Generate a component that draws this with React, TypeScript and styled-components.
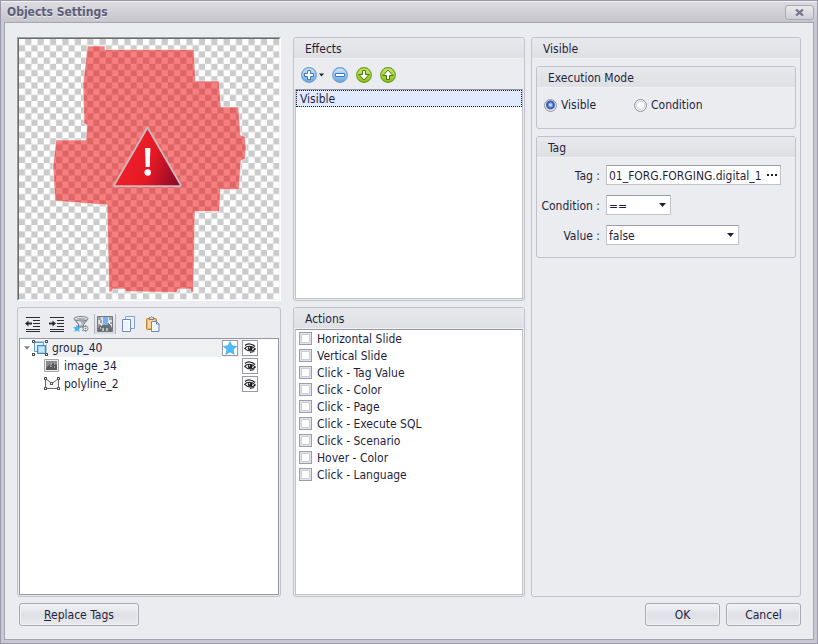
import React, { useState } from "react";
import styled, { createGlobalStyle, css } from "styled-components";

const ink = "#1f1f3d";
const line = "#c1c2ca";
const face = "#ebecef";

const GlobalStyle = createGlobalStyle`
  *, *::before, *::after { box-sizing: border-box; }
  body { margin: 0; }
  body, button, input, select {
    font-family: "DejaVu Sans Condensed", "DejaVu Sans", sans-serif;
    font-size: 12px;
    line-height: 16px;
    color: ${ink};
  }
  ul { list-style: none; margin: 0; padding: 0; }
  svg { display: block; flex: none; }
`;

const Window = styled.div`
  display: flex;
  flex-direction: column;
  min-height: 100vh;
  border: 1px solid #9b99a9;
  background: #c9c8d2;
`;

const TitleBar = styled.header`
  display: flex;
  align-items: center;
  justify-content: space-between;
  height: 21px;
  padding: 0 3px 0 6px;
  border-top: 1px solid #f1f1f4;
  background: linear-gradient(#dbdbe0, #c5c5cb);
`;

const Title = styled.h1`
  margin: 0;
  font-size: 12px;
  line-height: 16px;
  font-weight: bold;
  color: #5d5d76;
  text-shadow: 0 1px 0 #e8e8ee;
`;

const CloseButton = styled.button`
  display: grid;
  place-items: center;
  width: 29px;
  height: 15px;
  padding: 0;
  border: 1px solid #a9a9b5;
  border-radius: 3px;
  background: linear-gradient(#e9e9ed, #cfcfd6);
`;

const Body = styled.main`
  flex: 1;
  display: flex;
  flex-direction: column;
  gap: 6px;
  margin: 0 3px 3px;
  padding: 14px 12px 13px;
  border: 1px solid #a5a4b3;
  background: ${face};
`;

const Columns = styled.div`
  flex: 1;
  display: flex;
  gap: 12px;
`;

const SideBySide = styled.div`
  flex: 508 1 0;
  min-width: 0;
  display: flex;
  gap: 6px;
`;

const Column = styled.div<{ $share: number }>`
  flex: ${(p) => p.$share} 1 0;
  min-width: 0;
  display: flex;
  flex-direction: column;
  gap: 6px;
`;

const Panel = styled.section<{ $share?: number }>`
  flex: ${(p) => (p.$share ? `${p.$share} 1 0` : "none")};
  display: flex;
  flex-direction: column;
  border: 1px solid ${line};
  border-radius: 3px;
  background: ${face};
`;

const PanelTitle = styled.h2`
  margin: 0;
  height: 21px;
  padding: 3px 11px 1px;
  font-size: 12px;
  line-height: 16px;
  font-weight: normal;
  border-bottom: 1px solid #f1f1f4;
  border-radius: 2px 2px 0 0;
  background: linear-gradient(#e8e9ec, #dfe0e4);
`;

const Preview = styled.div`
  flex: 264 1 0;
  min-height: 0;
  border: 1px solid;
  border-color: #a0a0a0 #fff #fff #a0a0a0;
  display: grid;
`;

const PreviewFrame = styled.div`
  min-height: 0;
  border: 1px solid;
  border-color: #696969 #f3f3f5 #f3f3f5 #696969;
  display: grid;
`;

const Toolbar = styled.div<{ $compact?: boolean }>`
  display: flex;
  align-items: center;
  height: 30px;
  padding: 1px 7px 0;
  gap: 8px;
  ${(p) =>
    p.$compact &&
    css`
      padding-top: 2px;
    `}
`;

const ToolButton = styled.button<{ $pressed?: boolean }>`
  display: flex;
  align-items: center;
  gap: 2px;
  height: 20px;
  padding: 0;
  border: 0;
  background: none;
  ${(p) =>
    p.$pressed &&
    css`
      padding: 0 2px;
      margin: 0 -3px;
      border: solid #b4b5c1;
      border-width: 0 1px;
      background: linear-gradient(#eeeff2, #d8d9e0);
    `}
`;

const ListBox = styled.ul<{ $edge?: string }>`
  flex: 1;
  margin: 0 1px 1px;
  border: 1px solid ${(p) => p.$edge || line};
  border-top-color: #9696a5;
  background: #fff;
`;

const EffectItem = styled.li`
  height: 17px;
  padding: 0 3px;
  line-height: 16px;
  border: 1px dotted #14143c;
  background: #e1e9ff;
`;

const ActionItem = styled.li`
  height: 17px;
`;

const CheckLabel = styled.label`
  display: inline-flex;
  align-items: center;
  gap: 5px;
  height: 17px;
  padding-left: 3px;
`;

const CheckBox = styled.input`
  appearance: none;
  width: 13px;
  height: 13px;
  margin: 0;
  border: 1px solid #9c9cab;
  background: #fff;
  box-shadow: inset 0 0 0 1px #e3e3ea, inset 0 0 0 2px #cdced9;
  &:checked { background: #4a6fc4; }
`;

const TreeRow = styled.li<{ $level: number; $active?: boolean }>`
  display: flex;
  align-items: center;
  gap: 4px;
  height: 18px;
  margin-right: 20px;
  padding-left: ${(p) => (p.$level === 0 ? 3 : 24)}px;
  background: ${(p) =>
    p.$active ? "linear-gradient(90deg, #fff 28px, #eff0f2 28px)" : "#fff"};
`;

const TreeName = styled.span`
  flex: 1;
`;

const CellButton = styled.button`
  display: grid;
  place-items: center;
  width: 16px;
  height: 16px;
  padding: 0;
  border: 1px solid #9a9aa6;
  background: #fff;
`;

const Expander = styled.button`
  display: grid;
  place-items: center;
  width: 7px;
  height: 16px;
  padding: 0;
  margin-right: -2px;
  border: 0;
  background: none;
`;

const Settings = styled.div`
  display: flex;
  flex-direction: column;
  gap: 7px;
  padding: 7px 4px;
`;

const Radios = styled.div`
  display: grid;
  grid-template-columns: 90px 1fr;
  padding: 9px 7px 15px;
`;

const RadioLabel = styled.label`
  display: flex;
  align-items: center;
  gap: 4px;
`;

const Radio = styled.input`
  appearance: none;
  width: 13px;
  height: 13px;
  margin: 0;
  border: 1px solid #9696a6;
  border-radius: 50%;
  background: radial-gradient(circle, #fff 0 3px, #d4d5de 4px, #ececf1 5px);
  &:checked {
    background: radial-gradient(circle at 50% 45%, #c4d8fc 0 1px, #3459b5 3px, #4a68b4 4px, #e4e6ee 5px);
  }
`;

const Fields = styled.div`
  display: grid;
  grid-template-columns: 63px 1fr;
  column-gap: 6px;
  row-gap: 10px;
  padding: 7px 14px 12px 0;
`;

const FieldLabel = styled.label`
  padding-top: 3px;
  text-align: right;
  white-space: nowrap;
`;

const FieldBox = styled.div<{ $width?: string }>`
  display: flex;
  width: ${(p) => p.$width || "100%"};
  height: 20px;
  border: 1px solid ${line};
  border-top-color: #9c9cab;
  background: #fff;
`;

const TextInput = styled.input`
  flex: 1;
  min-width: 0;
  padding: 1px 0 0 2px;
  border: 0;
  background: none;
`;

const MoreButton = styled.button`
  width: 16px;
  padding: 0;
  border: 0;
  background: none;
  display: grid;
  place-items: center;
`;

const SelectBox = styled(FieldBox)`
  display: grid;
  align-items: center;
  & > * { grid-area: 1 / 1; }
  & > svg { justify-self: end; margin-right: 4px; pointer-events: none; }
`;

const Select = styled.select`
  appearance: none;
  width: 100%;
  height: 18px;
  padding: 2px 16px 0 2px;
  border: 0;
  background: none;
`;

const Footer = styled.footer`
  display: flex;
  gap: 6px;
  padding-left: 2px;
`;

const Spacer = styled.div`
  flex: 1;
`;

const PushButton = styled.button<{ $wide?: boolean }>`
  width: ${(p) => (p.$wide ? 120 : 75)}px;
  height: 23px;
  padding: 0;
  border: 1px solid #a8a9b3;
  border-radius: 3px;
  background: linear-gradient(#f3f4f6, #dfe0e5 50%, #e9eaed);
  box-shadow: inset 0 0 0 1px #f1f2f4;
`;

const Caret = ({ fill = ink, w = 7 }: { fill?: string; w?: number }) => (
  <svg width={w} height="4" viewBox="0 0 7 4">
    <path d="M0 0h7L3.500 4z" fill={fill} />
  </svg>
);

const Round = ({ tone, d }: { tone: "blue" | "green"; d: string }) => {
  const blue = tone === "blue";
  return (
    <svg width="16" height="16" viewBox="0 0 16 16">
      <defs>
        <linearGradient id={`round-${tone}`} x1="0" y1="0" x2="0" y2="1">
          <stop offset="0" stopColor={blue ? "#d2ebfa" : "#cdec72"} />
          <stop offset="1" stopColor={blue ? "#66a6df" : "#86c010"} />
        </linearGradient>
      </defs>
      <circle cx="8" cy="8" r="7.400" fill={`url(#round-${tone})`} stroke={blue ? "#6e9ccf" : "#6f9c1f"} strokeWidth="1.100" />
      <path d={d} fill="#fff" stroke={blue ? "#3f76b8" : "#47740c"} strokeWidth="1" />
    </svg>
  );
};

const IndentIcon = ({ out }: { out?: boolean }) => (
  <svg width="16" height="16" viewBox="0 0 16 16" fill="#2b2b31">
    <path d="M1 1h14v1H1zM8 4h7v1H8zM8 7h7v1H8zM8 10h7v1H8zM1 13h14v1H1zM1 15h14v1H1z" />
    {out ? <path d="M0 7.500 3.500 4.500V6.500h3.500v2H3.500v2z" /> : <path d="M7 7.500 3.500 4.500V6.500H0v2h3.500v2z" />}
  </svg>
);

const FilterIcon = () => (
  <svg width="16" height="16" viewBox="0 0 16 16">
    <path d="M1 3l4.500 5.500V11h5V8.500L15 3z" fill="#b3b8c0" stroke="#70747c" />
    <path d="M4 5l3 4h1.500L7.500 5z" fill="#eceef1" />
    <ellipse cx="8" cy="2.700" rx="7" ry="2.200" fill="#e6e9ed" stroke="#7a7e86" />
    <ellipse cx="8" cy="2.900" rx="4.500" ry="1" fill="#a5aab2" />
    <path d="M4 8.500l1.200 2.400 2.800.3-2 1.900.6 2.800L4 14.500l-2.600 1.400.6-2.800-2-1.900 2.800-.3z" fill="#48b5ee" />
    <circle cx="12.500" cy="12.500" r="2.500" fill="#e7e9ec" stroke="#8b8f97" />
    <path d="M9 10.500l2 1M9 14.500l2-1M12.500 9v2M12.500 14v2" stroke="#8b8f97" fill="none" />
    <circle cx="12.500" cy="12.500" r=".8" fill="#7c8088" />
  </svg>
);

const PictureIcon = () => (
  <svg width="16" height="16" viewBox="0 0 16 16">
    <path d="M.5 .5h15v15H.5z" fill="#dcdee2" stroke="#74767e" />
    <path d="M1 1h3v3H1zM12 1h3v3h-3zM1 8h2v3H1zM13 6h2v2h-2zM3 4h2v3H3z" fill="#a2a5ab" />
    <path d="M1 15v-3l2-3 2 1 1-2h4l2-1 2 3 1 2v3h-4v-2H9v2z" fill="#696c73" />
    <path d="M5 12h2v3H5zM9 12h2v3H9zM3 11h1v2H3z" fill="#b9bcc2" />
    <path d="M6 1h5v8H6z" fill="#79b0f0" />
    <path d="M12 5h1v3h-1z" fill="#fff" />
  </svg>
);

const CopyIcon = () => (
  <svg width="16" height="16" viewBox="0 0 16 16">
    <path d="M4.500 .5h9v12h-9z" fill="#eaf1fb" stroke="#8ba1cd" />
    <path d="M1.500 3.500h8v12h-8z" fill="#fbfdff" stroke="#6c87be" />
    <path d="M3 5h5v9H3z" fill="#edf4fd" />
  </svg>
);

const PasteIcon = () => (
  <svg width="16" height="16" viewBox="0 0 16 16">
    <rect x="1.500" y="2.500" width="10" height="11" rx="1" fill="#f2b35a" stroke="#bd8136" />
    <path d="M3 4h7v8H3z" fill="#fad59a" />
    <path d="M4.500 3.500v-2h1l1-1 1 1h1v2z" fill="#d4d7dd" stroke="#7c7f88" />
    <path d="M6.500 5.500h5l2.500 2.500v7.500H6.500z" fill="#f2f7ff" stroke="#6c87be" />
    <path d="M11.500 5.500V8H14" fill="none" stroke="#6c87be" />
  </svg>
);

const handles = (pts: number[][]) =>
  pts.map(([x, y]) => (
    <rect key={`${x}-${y}`} x={x} y={y} width="2" height="2" fill="#fff" stroke="#56565c" />
  ));

const GroupIcon = () => (
  <svg width="16" height="16" viewBox="0 0 16 16">
    <path d="M3 1.500h10M14.500 3v10" stroke="#a9c4da" />
    <path d="M2.500 2.500h9v9h-9z" fill="#e3f2fc" stroke="#5c9fd2" />
    <path d="M5.500 5.500h8v8h-8z" fill="#9fd0f5" stroke="#3d8ac8" />
    <path d="M7 7h5v5H7z" fill="#c9e5fa" />
    {handles([[0.5, 0.5], [13.5, 0.5], [0.5, 13.5], [13.5, 13.5]])}
  </svg>
);

const ImageIcon = () => (
  <svg width="16" height="16" viewBox="0 0 16 16">
    <path d="M.5 1.500h14v12H.5z" fill="#ededed" stroke="#a3a3a8" />
    <path d="M2 3h11v9H2z" fill="#8b8b8e" />
    <path d="M2 10l3-3 2 1 2-3 4 2v5H2z" fill="#58585b" />
    <path d="M7 5h1v2H7zM10 5h1v2h-1zM6 8h2v1H6zM10 8h1v2h-1z" fill="#a5a5a9" />
  </svg>
);

const PolylineIcon = () => (
  <svg width="16" height="16" viewBox="0 0 16 16">
    <path d="M1.500 12.500v-10L8 7.500l6.500-5v10z" fill="#f3f5f5" stroke="#66666c" />
    {handles([[0.5, 1.5], [13.5, 1.5], [0.5, 11.5], [13.5, 11.5], [6.5, 6.5]])}
  </svg>
);

const EyeIcon = () => (
  <svg width="12" height="10" viewBox="0 0 12 10">
    <path d="M1 2.500C3.500 .3 8 .3 11 3.500" fill="none" stroke="#1b1b1f" strokeWidth="1.200" />
    <path d="M.7 5.300C3 2.600 8 2.300 11.300 6 8 8.700 4 8.500 .7 5.300z" fill="#fff" stroke="#1b1b1f" strokeWidth="1.100" />
    <circle cx="6.200" cy="5.400" r="2.300" fill="#1b1b1f" />
    <circle cx="5.500" cy="4.700" r=".7" fill="#fff" />
    <path d="M6 9.300c2 0 3.500-.5 4.500-1.200" fill="none" stroke="#1b1b1f" />
  </svg>
);

const StarIcon = () => (
  <svg width="14" height="14" viewBox="0 0 14 14">
    <path d="M7 .5l2 4.300 4.700.5-3.500 3.200 1 4.800L7 10.900l-4.200 2.400 1-4.800L.3 5.300 5 4.800z" fill="#4fbcf3" stroke="#35a5e2" strokeWidth=".6" />
  </svg>
);

const PreviewDrawing = () => (
  <svg width="100%" height="100%" viewBox="0 0 260 260" preserveAspectRatio="xMidYMid slice" role="img" aria-label="group_40">
    <defs>
      <pattern id="checker" width="12.400" height="12.400" patternUnits="userSpaceOnUse">
        <path d="M0 0h12.400v12.400H0z" fill="#fff" />
        <path d="M6.200 0h6.200v6.200H6.200zM0 6.200h6.200v6.200H0z" fill="#cbcbcb" />
      </pattern>
      <linearGradient id="alert" x1="0" y1="0.500" x2="1" y2="0.800">
        <stop offset="0" stopColor="#f4212b" />
        <stop offset=".55" stopColor="#e31824" />
        <stop offset="1" stopColor="#8d0a2a" />
      </linearGradient>
    </defs>
    <path d="M0 0h260v260H0z" fill="url(#checker)" />
    <g transform="translate(-19 -39)">
      <path
        d="M87.500 46H105V49.500H194L195.500 81H219L221 107H238.500L240.500 135L245 136.500L246 148L245 159L241 160.500L239 189.500H220.500L219.500 211.500H195L193.500 292H191L190.500 289H178L176.500 292.500L126 291.500L124.500 289H113L111.500 292H109L107 205L55 201L53 166L56 140H86L87 125L84 123.500L83 84Z"
        fill="#ef0000"
        fillOpacity=".5"
        stroke="#fff"
        strokeOpacity=".55"
        strokeWidth="1"
      />
      <path d="M147.500 127.500L180.500 184.500Q181 186 179.500 186H115.500Q114 186 114.500 184.500Z" fill="url(#alert)" stroke="#c9bcbc" strokeWidth="1.800" strokeLinejoin="round" />
      <path d="M145 148h5.400l-.7 19h-4z" fill="#fff" />
      <circle cx="147.700" cy="172.500" r="3.200" fill="#fff" />
    </g>
  </svg>
);

const actions = [
  "Horizontal Slide",
  "Vertical Slide",
  "Click - Tag Value",
  "Click - Color",
  "Click - Page",
  "Click - Execute SQL",
  "Click - Scenario",
  "Hover - Color",
  "Click - Language",
];

const PLUS = "M6.500 3.500h3v3h3v3h-3v3h-3v-3h-3v-3h3z";
const MINUS = "M3.500 6.500h9v3h-9z";
const DOWN = "M6.500 3.500h3v4h3.500L8 13 3 7.500h3.500z";
const UP = "M6.500 12.500h3v-4H13L8 3 3 8.500h3.500z";

export default function App() {
  const [mode, setMode] = useState("visible");
  return (
    <>
      <GlobalStyle />
      <Window>
        <TitleBar>
          <Title>Objects Settings</Title>
          <CloseButton aria-label="Close">
            <svg width="9" height="7" viewBox="0 0 9 7">
              <path d="M1 .5l7 6M8 .5l-7 6" stroke="#74748a" strokeWidth="2.200" />
            </svg>
          </CloseButton>
        </TitleBar>
        <Body>
          <Columns>
            <Column $share={264}>
              <Preview>
                <PreviewFrame>
                  <PreviewDrawing />
                </PreviewFrame>
              </Preview>
              <Panel $share={290}>
                <Toolbar $compact>
                  <ToolButton aria-label="Outdent"><IndentIcon out /></ToolButton>
                  <ToolButton aria-label="Indent"><IndentIcon /></ToolButton>
                  <ToolButton aria-label="Filter"><FilterIcon /></ToolButton>
                  <ToolButton aria-label="Transparency" aria-pressed="true" $pressed><PictureIcon /></ToolButton>
                  <ToolButton aria-label="Copy"><CopyIcon /></ToolButton>
                  <ToolButton aria-label="Paste"><PasteIcon /></ToolButton>
                </Toolbar>
                <ListBox $edge="#9696a5">
                  <TreeRow $level={0} $active>
                    <Expander aria-label="Collapse"><Caret fill="#84848f" w={6} /></Expander>
                    <GroupIcon />
                    <TreeName>group_40</TreeName>
                    <CellButton aria-label="Favourite"><StarIcon /></CellButton>
                    <CellButton aria-label="Show group_40"><EyeIcon /></CellButton>
                  </TreeRow>
                  <TreeRow $level={1}>
                    <ImageIcon />
                    <TreeName>image_34</TreeName>
                    <CellButton aria-label="Show image_34"><EyeIcon /></CellButton>
                  </TreeRow>
                  <TreeRow $level={1}>
                    <PolylineIcon />
                    <TreeName>polyline_2</TreeName>
                    <CellButton aria-label="Show polyline_2"><EyeIcon /></CellButton>
                  </TreeRow>
                </ListBox>
              </Panel>
            </Column>
            <SideBySide>
              <Column $share={232}>
                <Panel $share={264}>
                  <PanelTitle>Effects</PanelTitle>
                  <Toolbar>
                    <ToolButton aria-label="Add">
                      <Round tone="blue" d={PLUS} />
                      <Caret w={5} />
                    </ToolButton>
                    <ToolButton aria-label="Remove"><Round tone="blue" d={MINUS} /></ToolButton>
                    <ToolButton aria-label="Move down"><Round tone="green" d={DOWN} /></ToolButton>
                    <ToolButton aria-label="Move up"><Round tone="green" d={UP} /></ToolButton>
                  </Toolbar>
                  <ListBox role="listbox" aria-label="Effects">
                    <EffectItem role="option" aria-selected="true">Visible</EffectItem>
                  </ListBox>
                </Panel>
                <Panel $share={290}>
                  <PanelTitle>Actions</PanelTitle>
                  <ListBox>
                    {actions.map((name) => (
                      <ActionItem key={name}>
                        <CheckLabel>
                          <CheckBox type="checkbox" />
                          {name}
                        </CheckLabel>
                      </ActionItem>
                    ))}
                  </ListBox>
                </Panel>
              </Column>
              <Column $share={270}>
                <Panel $share={1}>
                  <PanelTitle>Visible</PanelTitle>
                  <Settings>
                    <Panel>
                      <PanelTitle>Execution Mode</PanelTitle>
                      <Radios>
                        <RadioLabel>
                          <Radio type="radio" name="mode" checked={mode === "visible"} onChange={() => setMode("visible")} />
                          Visible
                        </RadioLabel>
                        <RadioLabel>
                          <Radio type="radio" name="mode" checked={mode === "condition"} onChange={() => setMode("condition")} />
                          Condition
                        </RadioLabel>
                      </Radios>
                    </Panel>
                    <Panel>
                      <PanelTitle>Tag</PanelTitle>
                      <Fields>
                        <FieldLabel htmlFor="tag">Tag :</FieldLabel>
                        <FieldBox>
                          <TextInput id="tag" defaultValue="01_FORG.FORGING.digital_1" />
                          <MoreButton aria-label="Browse tags">
                            <svg width="10" height="2" viewBox="0 0 10 2" fill={ink}>
                              <path d="M0 0h2v2H0zM4 0h2v2H4zM8 0h2v2H8z" />
                            </svg>
                          </MoreButton>
                        </FieldBox>
                        <FieldLabel htmlFor="condition">Condition :</FieldLabel>
                        <SelectBox $width="65px">
                          <Select id="condition"><option>==</option></Select>
                          <Caret />
                        </SelectBox>
                        <FieldLabel htmlFor="value">Value :</FieldLabel>
                        <SelectBox $width="133px">
                          <Select id="value"><option>false</option></Select>
                          <Caret />
                        </SelectBox>
                      </Fields>
                    </Panel>
                  </Settings>
                </Panel>
              </Column>
            </SideBySide>
          </Columns>
          <Footer>
            <PushButton $wide><u>R</u>eplace Tags</PushButton>
            <Spacer />
            <PushButton>OK</PushButton>
            <PushButton>Cancel</PushButton>
          </Footer>
        </Body>
      </Window>
    </>
  );
}
